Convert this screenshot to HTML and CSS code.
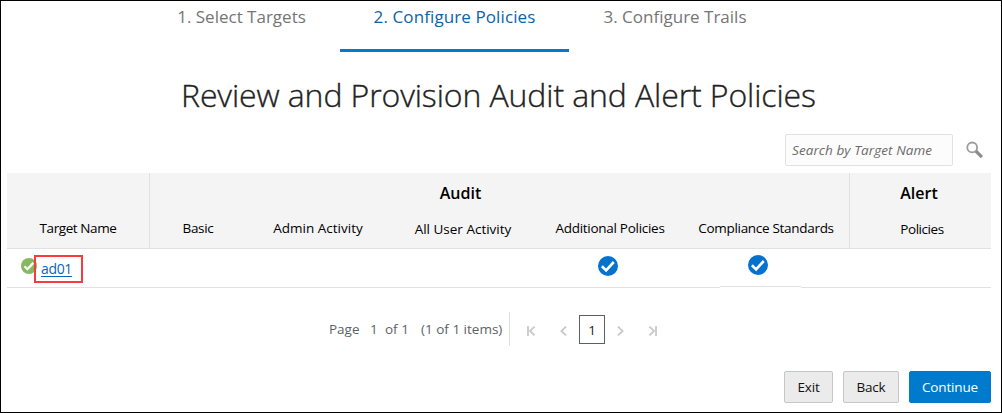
FILE: index.html
```html
<!DOCTYPE html>
<html lang="en">
<head>
<meta charset="utf-8">
<title>Review and Provision Audit and Alert Policies</title>
<link rel="stylesheet" href="styles.css">
</head>
<body>
<main class="page">
  <nav class="steps">
    <a class="step"><span class="t1">1. Select Targets</span></a>
    <a class="step active"><span class="t2">2. Configure Policies</span></a>
    <a class="step"><span class="t3">3. Configure Trails</span></a>
  </nav>
  <h1 class="title">Review and Provision Audit and Alert Policies</h1>
  <div class="search">
    <div class="search-box"><span>Search by Target Name</span></div>
    <svg class="search-icon" width="18" height="18" viewBox="0 0 18 18" fill="none"><circle cx="6.2" cy="6.4" r="4.9" stroke="#9b9b9b" stroke-width="1.8"/><path d="M9.8 10L15.9 16.1" stroke="#8b8d90" stroke-width="3.2"/></svg>
  </div>
  <section class="table">
    <div class="head">
      <div class="group target"><div class="band"></div><div class="cols"><span class="c0">Target Name</span></div></div>
      <div class="group audit">
        <div class="band"><span>Audit</span></div>
        <div class="cols"><span class="c1">Basic</span><span class="c2">Admin Activity</span><span class="c3 low">All User Activity</span><span class="c4">Additional Policies</span><span class="c5">Compliance Standards</span></div>
      </div>
      <div class="group alert">
        <div class="band"><span>Alert</span></div>
        <div class="cols"><span class="c6 low">Policies</span></div>
      </div>
    </div>
    <div class="row">
      <div class="name">
        <svg class="ok" width="16" height="16" viewBox="0 0 16 16"><circle cx="8" cy="8" r="8" fill="#84b961"/><path d="M3.5 8.2L6.5 11.2L12.3 4.9" fill="none" stroke="#fff" stroke-width="2.3"/></svg>
        <div class="mark"><a class="link">ad01</a></div>
      </div>
      <div class="cell additional"><svg width="20" height="20" viewBox="0 0 20 20"><circle cx="10" cy="10" r="10" fill="#0572ce"/><path d="M3.9 10.3L8.1 14.4L15.8 6" fill="none" stroke="#fff" stroke-width="2.6"/></svg></div>
      <div class="cell compliance"><svg width="20" height="20" viewBox="0 0 20 20"><circle cx="10" cy="10" r="10" fill="#0572ce"/><path d="M3.9 10.3L8.1 14.4L15.8 6" fill="none" stroke="#fff" stroke-width="2.6"/></svg><div class="seam"></div></div>
    </div>
  </section>
  <div class="pager">
    <div class="summary"><span class="p1">Page</span><span class="p2">1</span><span class="p3">of 1</span><span class="p4">(1 of 1 items)</span></div>
    <div class="controls">
      <svg class="first" width="9" height="10" viewBox="0 0 9 10"><path d="M1 0V10M7.6 .6L3 5L7.6 9.4"/></svg>
      <svg class="prev" width="7" height="10" viewBox="0 0 7 10"><path d="M6 .6L1.4 5L6 9.4"/></svg>
      <span class="current">1</span>
      <svg class="next" width="7" height="10" viewBox="0 0 7 10"><path d="M1 .6L5.6 5L1 9.4"/></svg>
      <svg class="last" width="9" height="10" viewBox="0 0 9 10"><path d="M8 0V10M1.4 .6L6 5L1.4 9.4"/></svg>
    </div>
  </div>
  <div class="actions">
    <button class="btn exit"><span>Exit</span></button>
    <button class="btn back"><span>Back</span></button>
    <button class="btn primary"><span>Continue</span></button>
  </div>
</main>
</body>
</html>
```
FILE: styles.css
```css
* { box-sizing: border-box; }
body { margin: 0; background: #fff; font-family: "Open Sans", "Noto Sans", sans-serif; font-size: 13.5px; color: #000; }
.page { width: 1002px; height: 413px; border: 1px solid #000; overflow: hidden; display: flex; flex-direction: column; }
.page span, .link { white-space: nowrap; }

.steps { display: grid; grid-template-columns: 197px 229px 212px; justify-content: start; padding-left: 142px; height: 51px; }
.step { display: flex; justify-content: center; height: 51px; padding-top: 4px; font-size: 17px; line-height: 24px; color: #757575; border-bottom: 3px solid transparent; }
.active { color: #0b63a8; border-bottom-color: #007acc; }
.t2 { letter-spacing: .1px; }

.title { margin: 19px 0 0 180px; height: 48px; font-size: 32px; line-height: 47px; font-weight: 300; letter-spacing: -.11px; color: #222; -webkit-text-stroke: .35px #222; white-space: nowrap; }

.search { display: flex; height: 32px; margin: 15px 0 0 784px; }
.search-box { width: 168px; height: 32px; padding-left: 6px; border: 1px solid #dfe1e3; border-radius: 2px; background: #fcfcfc; font-size: 13.5px; letter-spacing: .08px; font-style: italic; color: #6b6b6b; line-height: 30px; }
.search-icon { margin: 7px 0 0 13px; }

.table { margin: 7px 0 0 6px; width: 984px; }
.head { display: grid; grid-template-columns: 142px 700px 142px; height: 76px; background: #f4f4f4; border-bottom: 1px solid #dfe1e3; }
.group + .group { border-left: 1px solid #dfe1e3; }
.band { height: 40px; font-size: 16px; font-weight: 600; line-height: 40px; text-align: center; }
.audit .band { padding-right: 78px; }
.alert .band { padding-right: 3px; }
.cols { display: grid; line-height: 31px; text-align: center; }
.audit .cols { grid-template-columns: 96px 144px 146px 148px 164px; }
.alert .cols { padding-left: 3px; }
.low { padding-top: 1px; }
.c0 { letter-spacing: -.42px; }
.c1 { letter-spacing: -.3px; }
.c4 { letter-spacing: -.28px; }
.c5 { letter-spacing: -.3px; }
.c6 { letter-spacing: -.45px; }

.row { display: grid; grid-template-columns: 591px 121px 272px; height: 39px; border-bottom: 1px solid #dfe1e3; }
.name { display: flex; padding-left: 14px; }
.ok { margin-top: 9px; }
.mark { width: 49px; height: 28px; margin: 6px 0 0 -3px; border: 2px solid #f83b3b; padding-left: 5px; }
.link { color: #0b63ba; font-size: 14px; letter-spacing: -.35px; line-height: 24px; text-decoration: underline; text-underline-offset: 2px; }
.cell { height: 38px; padding-top: 7px; }
.compliance { padding: 6px 0 0 0; display: flex; flex-direction: column; }
.compliance svg { margin-left: 29px; flex: none; }
.seam { width: 81px; height: 2px; margin: 11px 0 0 1px; border-top: 1px solid #dfe1e3; background: #fff; flex: none; }

.pager { display: flex; height: 34px; margin: 24px 0 0 328px; color: #5c6266; }
.summary { display: flex; width: 181px; border-right: 1px solid #dcdee0; line-height: 34px; }
.p1 { width: 41px; }
.p2 { width: 15px; }
.p3 { width: 36px; }
.controls { display: flex; padding: 3px 0 0 17px; }
.controls svg { margin-top: 11px; fill: none; stroke: #c7c9cb; stroke-width: 1.8; }
.prev { margin-left: 24px; }
.current { width: 26px; height: 29px; margin-left: 12px; border: 1px solid #5b5f61; color: #222; text-align: center; line-height: 28px; }
.next { margin-left: 12px; }
.last { margin-left: 24px; }

.actions { display: flex; gap: 10px; margin: 25px 0 0 783px; }
.btn { height: 32px; padding: 0; border: 1px solid #c4c7c9; border-radius: 2px; background: #ebebeb; font: 13.5px "Open Sans", sans-serif; letter-spacing: -.2px; color: #111; }
.exit { width: 49px; }
.back { width: 56px; }
.primary { width: 82px; border-color: #007acc; background: #007acc; letter-spacing: -.15px; color: #fff; }
```
